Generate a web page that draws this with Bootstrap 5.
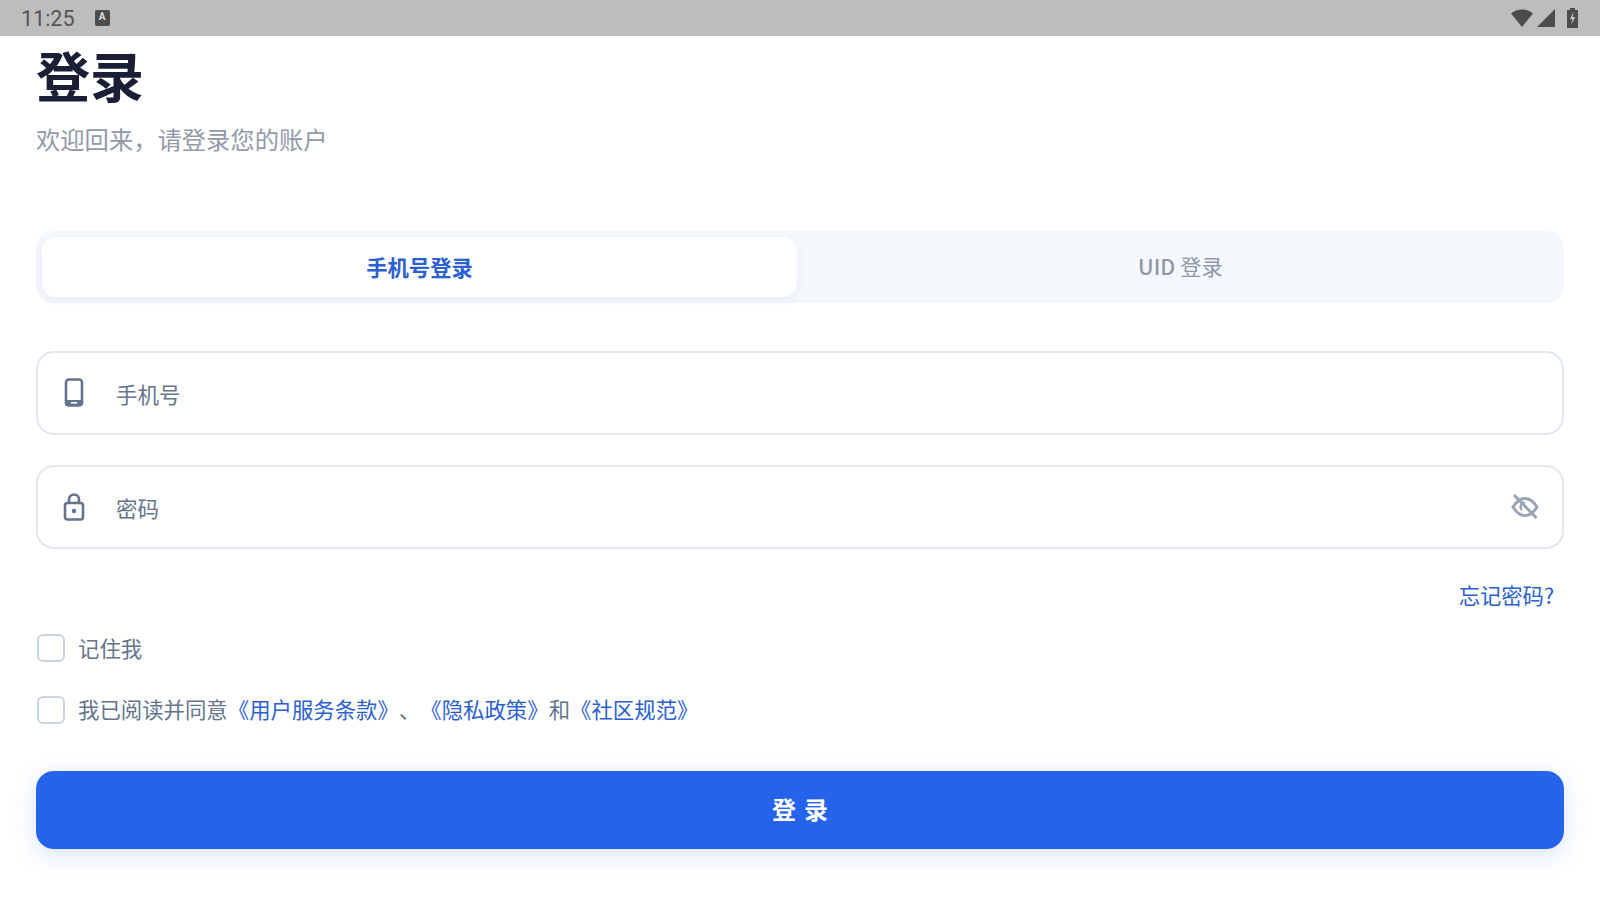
<!DOCTYPE html>
<html lang="zh-CN">
<head>
<meta charset="UTF-8">
<title>登录</title>
<link rel="stylesheet" href="https://cdn.jsdelivr.net/npm/bootstrap@5.3.0/dist/css/bootstrap.min.css">
<style>
html, body { height: 100%; overflow: hidden; }
body { font-family: "Noto Sans CJK SC", "Noto Sans", sans-serif; background: #fff; text-spacing-trim: space-all; }
.status-bar { height: 36px; background: #bdbdbd; padding: 0 22px 0 21px; color: #555; font: 21.5px Roboto, sans-serif; }
.status-a { width: 15px; height: 16px; background: #4c4c4c; border-radius: 2px; color: #ddd; font: 700 10px/14px Roboto, sans-serif; text-align: center; margin-left: 20px; }
.page-wrap { padding: 0 36px; }
.page-title { font-size: 54px; line-height: 76px; font-weight: 700; color: #1a1f36; margin: 1px 0 0; }
.page-sub { font-size: 24.3px; line-height: 34px; color: #929aa9; margin: 9px 0 0; }
.tab-box { margin-top: 75px; height: 72px; padding: 6px; gap: 6px; background: #f4f7fb; border-radius: 18px; }
.tab-item { flex: 1 1 0; border-radius: 14px; font-size: 21.3px; color: #8e98aa; font-weight: 400; padding-bottom: 3px; }
.tab-uid { font-weight: 500; margin-right: .24em; }
.tab-item.on { background: #fff; color: #2a60d0; font-weight: 700; padding-bottom: 0; box-shadow: 0 3px 10px rgba(37,99,235,.07); }
.field-box { height: 84px; border: 2px solid #e2e8f0; border-radius: 18px; padding: 0 22px 0 23px; color: #64748b; font-size: 21.500px; background: #fff; }
.field-ico { width: 26px; height: 30px; margin-right: 29px; flex: none; }
.field-ph { padding-top: 3px; }
.forgot { color: #2a60d0; font-size: 21.3px; text-decoration: none; line-height: 30px; padding-right: 10px; }
.check-row { height: 30px; font-size: 21.4px; color: #64748b; line-height: 30px; }
.check-box { width: 28px; height: 28px; border: 2.500px solid #cbd5e1; border-radius: 6px; margin-left: 1px; margin-right: 13px; flex: none; background: #fff; }
.terms-text { margin-top: -3px; }
.check-row a { color: #2a60d0; text-decoration: none; }
.login-btn { height: 78px; width: 100%; background: #2563eb; color: #fff; border: 0; border-radius: 18px; font-size: 24px; font-weight: 700; letter-spacing: 8px; padding: 0 0 2px 8px; box-shadow: 0 6px 24px rgba(37,99,235,.18); }
.login-btn:hover { background: #2563eb; color: #fff; }
</style>
</head>
<body>
<div class="status-bar d-flex align-items-center">
  <span>11:25</span>
  <span class="status-a">A</span>
  <div class="ms-auto d-flex align-items-center gap-1">
    <svg width="22" height="18" viewBox="0 0 22 18"><path d="M0 4.500C6 -1 16 -1 22 4.500L11 18z" fill="#4c4c4c"/></svg>
    <svg width="18" height="18" viewBox="0 0 18 18"><path d="M18 0V18H0z" fill="#4c4c4c"/></svg>
    <svg class="ms-2" width="11" height="20" viewBox="0 0 11 20"><path d="M3 0H8V2H11V20H0V2H3z" fill="#4c4c4c"/><path d="M6.500 4L2.800 11H5.200L4.400 16.500 8.300 9H5.800z" fill="#bdbdbd"/></svg>
  </div>
</div>

<div class="page-wrap">
  <h1 class="page-title">登录</h1>
  <p class="page-sub">欢迎回来，请登录您的账户</p>

  <div class="tab-box d-flex">
    <div class="tab-item on d-flex align-items-center justify-content-center">手机号登录</div>
    <div class="tab-item d-flex align-items-center justify-content-center"><span class="tab-uid">UID</span>登录</div>
  </div>

  <div class="field-box d-flex align-items-center" style="margin-top:48px">
    <svg class="field-ico" viewBox="0 0 26 30"><rect x="5" y="1.500" width="16" height="26" rx="3" fill="none" stroke="#64748b" stroke-width="2.600"/><rect x="4" y="22" width="18" height="6" rx="2" fill="#64748b"/><rect x="10" y="24" width="6" height="1.600" fill="#fff"/></svg>
    <span class="field-ph">手机号</span>
  </div>
  <div class="field-box d-flex align-items-center" style="margin-top:30px">
    <svg class="field-ico" viewBox="0 0 26 30"><rect x="4" y="11" width="18" height="16.500" rx="2.500" fill="none" stroke="#64748b" stroke-width="2.600"/><path d="M8 11V7.500a5 5 0 0 1 10 0V11" fill="none" stroke="#64748b" stroke-width="2.600"/><circle cx="13" cy="19" r="2.200" fill="#64748b"/></svg>
    <span class="field-ph">密码</span>
    <svg class="ms-auto" width="30" height="30" viewBox="0 0 30 30" fill="none" stroke="#9aa5b5" stroke-width="3"><path d="M3 15C7 8.500 11 6.500 15 6.500S23 8.500 27 15C23 21.500 19 23.500 15 23.500S7 21.500 3 15z"/><path d="M15 11a4 4 0 0 0-3 7" stroke-width="2.400"/><path d="M4 3L26.500 26" stroke-width="3"/></svg>
  </div>

  <div class="text-end" style="margin-top:31px"><a class="forgot" href="#">忘记密码?</a></div>

  <div class="check-row d-flex align-items-center" style="margin-top:23px"><span class="check-box"></span><span>记住我</span></div>
  <div class="check-row d-flex align-items-center" style="margin-top:32px"><span class="check-box"></span><span class="terms-text">我已阅读并同意<a href="#">《用户服务条款》</a>、<a href="#">《隐私政策》</a>和<a href="#">《社区规范》</a></span></div>

  <button class="btn login-btn" style="margin-top:46px">登录</button>
</div>
<script src="https://cdn.jsdelivr.net/npm/bootstrap@5.3.0/dist/js/bootstrap.bundle.min.js"></script>
</body>
</html>
